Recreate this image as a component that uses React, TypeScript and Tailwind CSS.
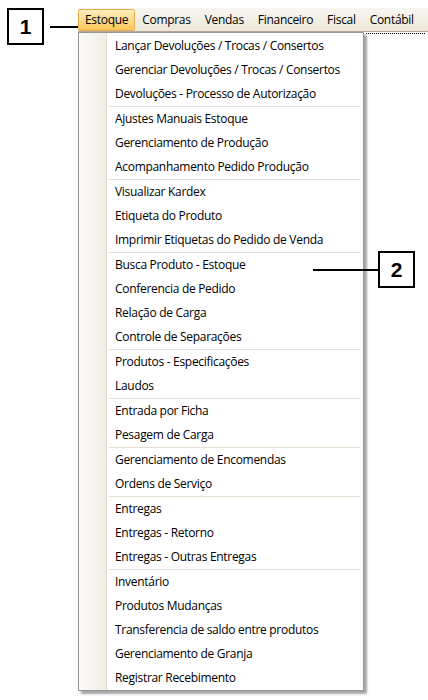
const groups: string[][] = [
  [
    "Lançar Devoluções / Trocas / Consertos",
    "Gerenciar Devoluções / Trocas / Consertos",
    "Devoluções - Processo de Autorização",
  ],
  ["Ajustes Manuais Estoque", "Gerenciamento de Produção", "Acompanhamento Pedido Produção"],
  ["Visualizar Kardex", "Etiqueta do Produto", "Imprimir Etiquetas do Pedido de Venda"],
  ["Busca Produto - Estoque", "Conferencia de Pedido", "Relação de Carga", "Controle de Separações"],
  ["Produtos - Especificações", "Laudos"],
  ["Entrada por Ficha", "Pesagem de Carga"],
  ["Gerenciamento de Encomendas", "Ordens de Serviço"],
  ["Entregas", "Entregas - Retorno", "Entregas - Outras Entregas"],
  [
    "Inventário",
    "Produtos Mudanças",
    "Transferencia de saldo entre produtos",
    "Gerenciamento de Granja",
    "Registrar Recebimento",
  ],
];

const topMenus = ["Compras", "Vendas", "Financeiro", "Fiscal", "Contábil"];

function Callout({ n }: { n: string }) {
  return (
    <div className="flex h-[37px] w-[37px] items-center justify-center border-2 border-black bg-white font-['Liberation_Sans',Arial,sans-serif] text-[21px] font-bold tracking-normal text-black">
      {n}
    </div>
  );
}

export default function App() {
  return (
    <div className="relative h-[700px] w-full overflow-hidden bg-white font-['Open_Sans',sans-serif] text-[12px] tracking-[-0.3px] text-black">
      {/* menubar */}
      <div className="pt-[8px] pl-[78px]">
        <div className="flex h-[24px] items-center border-b border-[#b8a898] bg-gradient-to-b from-[#f8f6f0] to-[#ebe7da] pr-2">
          <div className="flex h-[22px] items-center rounded-[2px] border border-[#e5ad4f] bg-gradient-to-b from-[#fdeebc] to-[#fbc655] px-[6px]">
            Estoque
          </div>
          {topMenus.map((m) => (
            <div key={m} className="px-[7px]">
              {m}
            </div>
          ))}
        </div>
        <div className="ml-[288px] mt-px w-[59px] border-t border-dotted border-black" />
      </div>

      {/* dropdown */}
      <div className="absolute left-[78px] top-[32px] w-[286px] border border-[#979797] bg-white shadow-[3px_3px_2px_rgba(0,0,0,0.35)]">
        <div className="flex">
          <div className="w-[28px] shrink-0 border-r border-[#e2ddd2] bg-gradient-to-r from-[#fbfaf7] to-[#f0ede4]" />
          <div className="flex-1 pl-[2px] pt-px">
            {groups.map((g, gi) => (
              <div key={gi}>
                {gi > 0 && <div className="mr-[3px] h-px bg-[#e3dfd3]" />}
                {g.map((item) => (
                  <div key={item} className="flex h-[24px] items-center pl-[6px]">
                    {item}
                  </div>
                ))}
              </div>
            ))}
          </div>
        </div>
      </div>

      {/* callouts */}
      <div className="absolute left-[7px] top-[8px] flex items-center">
        <Callout n="1" />
        <div className="ml-[6px] h-[2px] w-[28px] bg-black" />
      </div>
      <div className="absolute left-[313px] top-[251px] flex items-center">
        <div className="h-[2px] w-[65px] bg-black" />
        <Callout n="2" />
      </div>
    </div>
  );
}
